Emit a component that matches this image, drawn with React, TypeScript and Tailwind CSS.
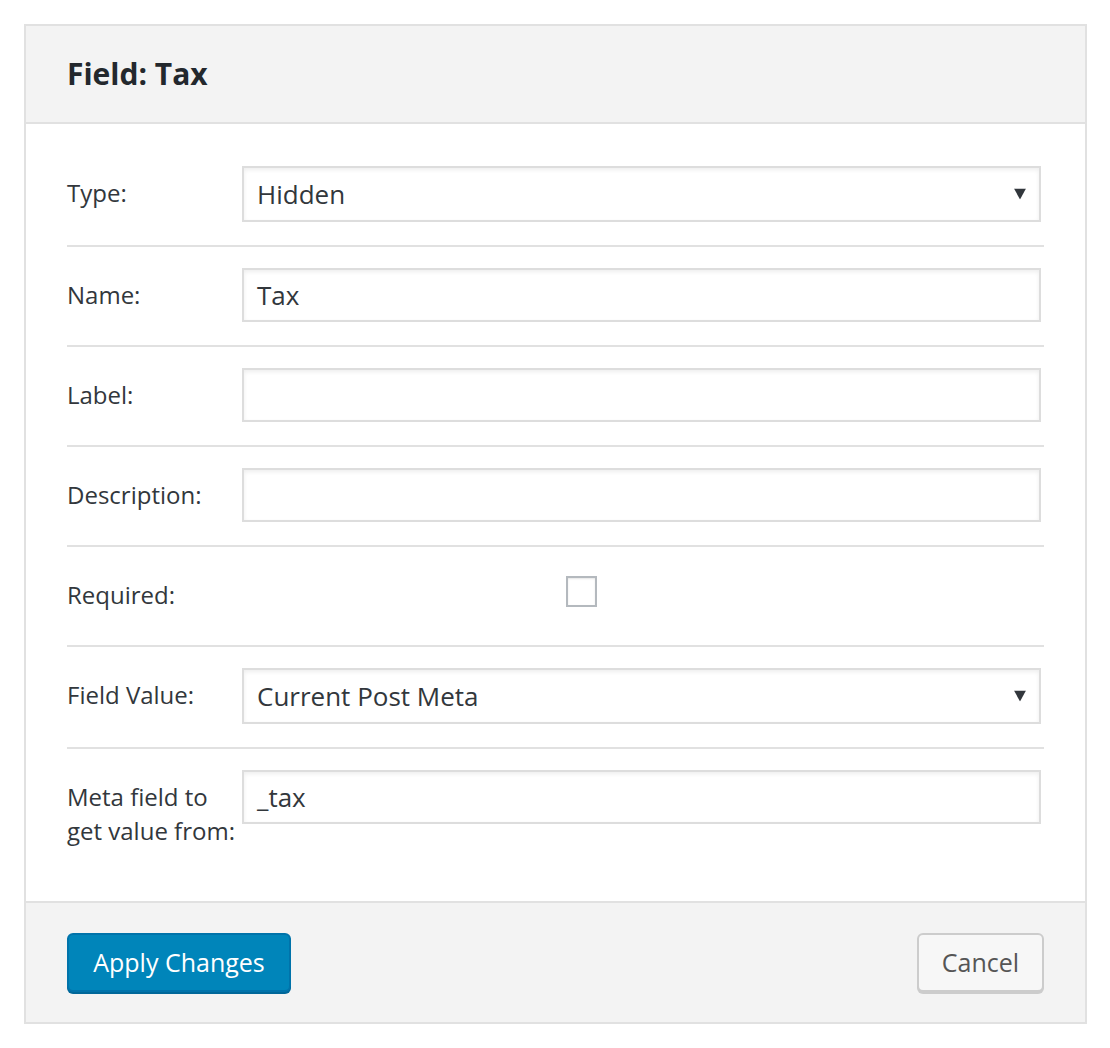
import { ReactNode } from 'react';

function Arrow() {
  return (
    <svg width="12" height="11" viewBox="0 0 12 11" className="absolute right-[13px] top-1/2 -translate-y-1/2">
      <polygon points="0,0 12,0 6,11" fill="#32373c" />
    </svg>
  );
}

function Row({ label, children, last = false }: { label: ReactNode; children: ReactNode; last?: boolean }) {
  return (
    <div className={`flex items-start pt-[21px] pb-[23px] ${last ? '' : 'border-b-2 border-[#e1e1e1]'}`}>
      <div className="w-[175px] shrink-0 pt-[10px] text-[24px] leading-[34px] text-[#32373c]">{label}</div>
      <div className="flex-1 min-h-[54px] pr-[3px]">{children}</div>
    </div>
  );
}

function TextBox({ value = '', select = false }: { value?: string; select?: boolean }) {
  return (
    <div
      className={`relative ${select ? 'h-[56px]' : 'h-[54px]'} border-2 border-[#dddddd] bg-white shadow-[inset_0_2px_4px_rgba(0,0,0,0.07)] flex items-center pl-[13px] text-[26px] text-[#32373c]`}
    >
      {value}
      {select && <Arrow />}
    </div>
  );
}

export default function App() {
  return (
    <div className="bg-white min-h-screen p-[24px] font-['Open_Sans',sans-serif]">
      <div className="w-[1063px] border-2 border-[#e1e1e1]">
        <div className="bg-[#f3f3f3] border-b-2 border-[#e1e1e1] px-[41px] py-[31px]">
          <h2 className="text-[30px] leading-[34px] font-bold text-[#23282d]">Field: Tax</h2>
        </div>

        <div className="px-[41px] pt-[21px] pb-[30px]">
          <Row label="Type:"><TextBox value="Hidden" select /></Row>
          <Row label="Name:"><TextBox value="Tax" /></Row>
          <Row label="Label:"><TextBox /></Row>
          <Row label="Description:"><TextBox /></Row>
          <Row label="Required:">
            <div className="ml-[324px] mt-[8px] w-[31px] h-[31px] border-2 border-[#b4b9be] bg-white shadow-[inset_0_1px_2px_rgba(0,0,0,0.1)]" />
          </Row>
          <Row label="Field Value:"><TextBox value="Current Post Meta" select /></Row>
          <Row label="Meta field to get value from:" last><TextBox value="_tax" /></Row>
        </div>

        <div className="bg-[#f3f3f3] border-t-2 border-[#e1e1e1] px-[41px] py-[30px] flex items-start justify-between">
          <button className="h-[59px] w-[224px] rounded-[6px] bg-[#0085ba] border-2 border-[#0073aa] shadow-[0_2px_0_#006799] text-white text-[25px]">
            Apply Changes
          </button>
          <button className="h-[59px] w-[127px] rounded-[6px] bg-[#f7f7f7] border-2 border-[#cccccc] shadow-[0_2px_0_#cccccc] text-[#555555] text-[25px]">
            Cancel
          </button>
        </div>
      </div>
    </div>
  );
}
